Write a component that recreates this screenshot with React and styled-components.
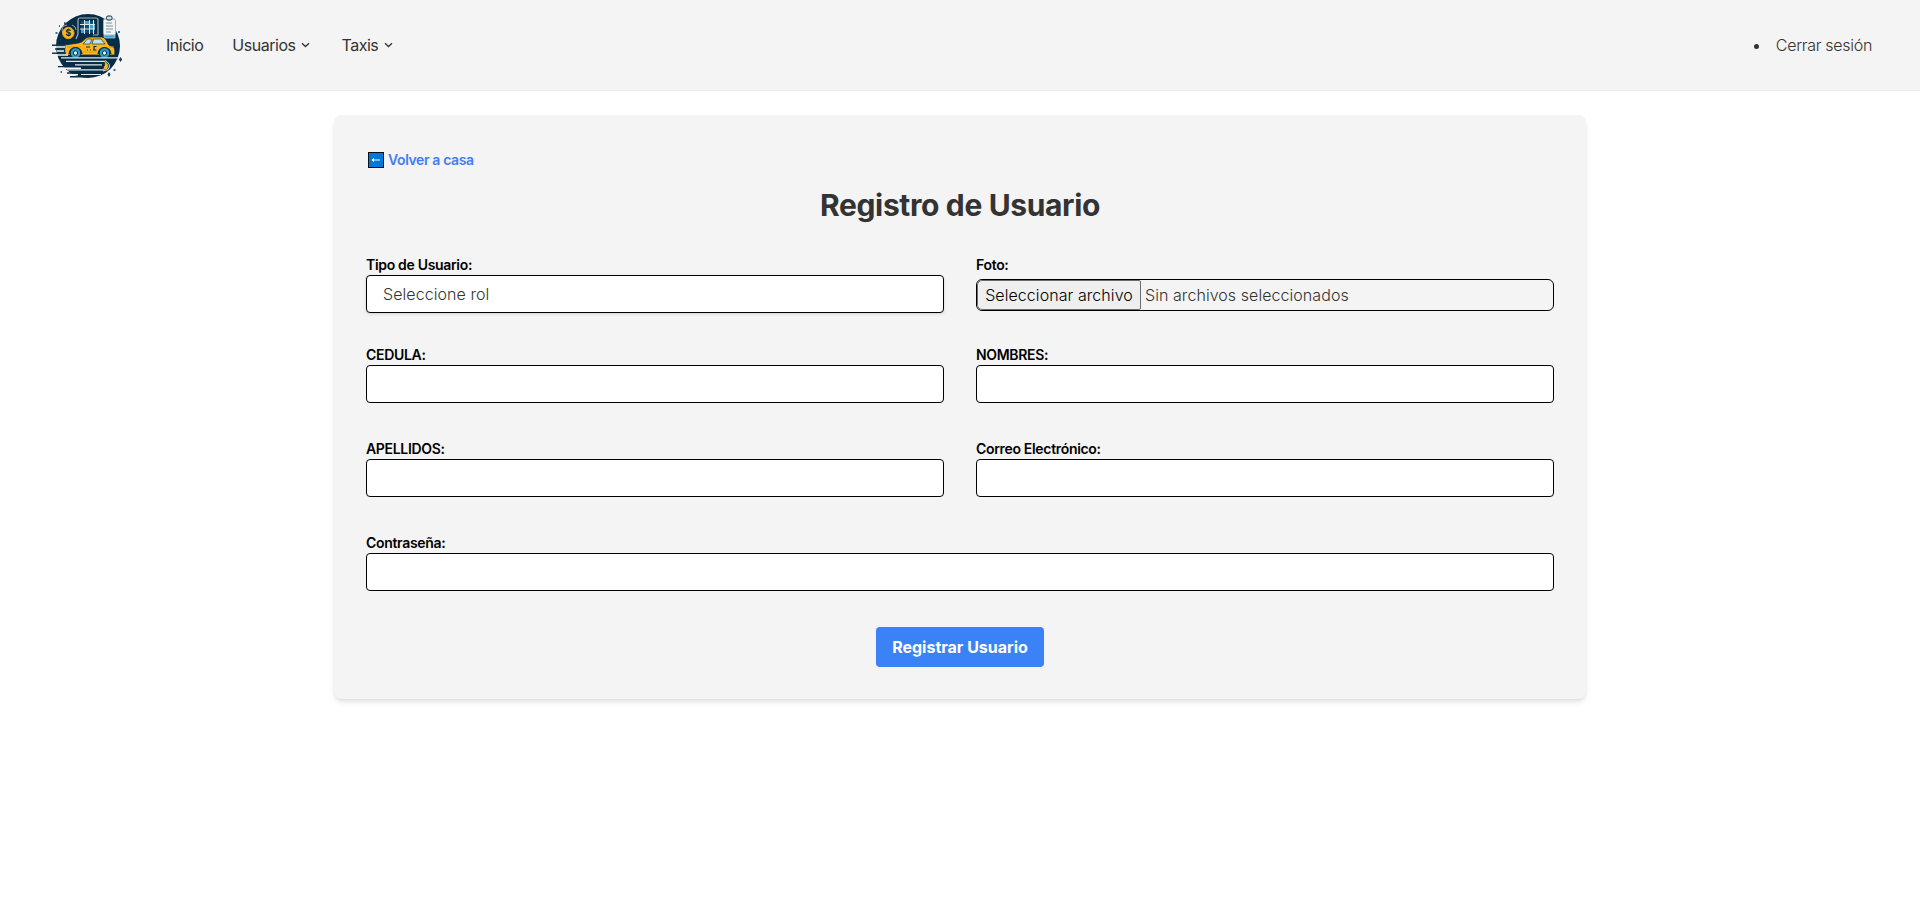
import React from "react";
import styled, { createGlobalStyle } from "styled-components";

const GlobalStyle = createGlobalStyle`
  *, *::before, *::after { box-sizing: border-box; }
  body {
    margin: 0;
    background: #fff;
    color: #333;
    font: 300 16px/24px Inter, "Liberation Sans", sans-serif;
  }
`;

const Page = styled.div`
  min-height: 100vh;
  background: #fff;
`;

const NavBar = styled.header`
  display: flex;
  align-items: center;
  height: 91px;
  padding: 0 48px;
  background: #f4f4f4;
  border-bottom: 1px solid #ebebeb;
`;

const Menu = styled.nav`
  display: flex;
  align-items: center;
  gap: 29px;
  margin-left: 40px;
`;

const MenuItem = styled.a`
  display: flex;
  align-items: center;
  gap: 5.5px;
  color: #333;
  font-weight: 400;
  letter-spacing: -0.48px;
  text-decoration: none;

  svg {
    margin-right: 2.5px;
  }
`;

const Session = styled.ul`
  margin: 0 0 0 auto;
  padding: 0;
  list-style: disc inside;
  letter-spacing: -0.3px;
`;

const Card = styled.main`
  display: flex;
  flex-direction: column;
  width: 1252px;
  margin: 24px auto 0;
  padding: 32px;
  background: #f4f4f4;
  border-radius: 8px;
  box-shadow: 0 4px 6px -1px rgba(0, 0, 0, 0.1), 0 2px 4px -1px rgba(0, 0, 0, 0.06);
`;

const BackLink = styled.a`
  display: flex;
  align-items: center;
  gap: 4px;
  height: 24px;
  padding: 1px 0 0 2px;
  color: #437cf7;
  font-size: 14px;
  font-weight: 600;
  letter-spacing: -0.38px;
  text-decoration: none;
`;

const Title = styled.h1`
  margin: 16px 0 32px;
  font-size: 30px;
  font-weight: 700;
  line-height: 36px;
  letter-spacing: -0.36px;
  text-align: center;
`;

const Form = styled.form`
  display: grid;
  grid-template-columns: 1fr 1fr;
  gap: 32px;
`;

const Field = styled.div`
  display: flex;
  flex-direction: column;
  grid-column: ${(p) => (p.$wide ? "1 / -1" : "auto")};
  margin-bottom: ${(p) => (p.$spaced ? "4px" : "0")};
`;

const Label = styled.label`
  color: #000;
  font-size: 14px;
  font-weight: 600;
  line-height: 20px;
  letter-spacing: -0.32px;
`;

const TextInput = styled.input`
  width: 100%;
  height: 38px;
  padding: 8px 12px;
  border: 1px solid #000;
  border-radius: 4px;
  background: #fff;
  font: inherit;
`;

const RoleSelect = styled.select`
  appearance: none;
  width: 100%;
  height: 38px;
  padding: 0 16px;
  border: 1px solid #000;
  border-radius: 4px;
  background: #fff;
  color: #333;
  font: inherit;
  letter-spacing: 0.07px;
  box-shadow: 0 1px 3px rgba(0, 0, 0, 0.14);
`;

const FilePicker = styled.div`
  display: flex;
  align-items: stretch;
  height: 32px;
  margin-top: 4px;
  border: 1px solid #000;
  border-radius: 6px;
  overflow: hidden;
`;

const FileButton = styled.button`
  width: 164px;
  padding: 0 7px;
  border: 1px solid #6b6b6b;
  border-radius: 5px 2px 2px 5px;
  background: #efefef;
  color: #000;
  font: inherit;
  letter-spacing: 0.07px;
  white-space: nowrap;
`;

const FileName = styled.span`
  margin-left: 4px;
  line-height: 30px;
  letter-spacing: 0.06px;
`;

const SubmitButton = styled.button`
  grid-column: 1 / -1;
  justify-self: center;
  width: 168px;
  height: 40px;
  padding: 0;
  border: 0;
  border-radius: 4px;
  background: #3b82f6;
  color: #fff;
  font: inherit;
  font-weight: 700;
`;

const Chevron = () => (
  <svg width="9" height="6" viewBox="0 0 9 6" fill="none" stroke="#333" strokeWidth="1.3">
    <path d="M1 1.2 4.5 4.5 8 1.2" />
  </svg>
);

const BackIcon = () => (
  <svg width="16" height="16" viewBox="0 0 16 16">
    <rect x=".5" y=".5" width="15" height="15" fill="#0078d7" stroke="#101010" />
    <path d="M5 8h7" stroke="#fff" />
    <path d="M6 5.9v4.2L3.4 8z" fill="#fff" />
  </svg>
);

const Logo = () => (
  <svg width="78" height="80" viewBox="0 0 78 80" fill="none">
    <circle cx="40" cy="41" r="32" fill="#062d45" />
    <path d="M30 29V15q0-2 2-2h16q2 0 2 2v15M30 29l-2 5M50 30h-5" stroke="#9db1bd" strokeWidth="1.2" />
    <path d="M33 16h14v12H33z" fill="#164c68" />
    <path d="M37 16h4v4h-4zM42 20h5v4h-5zM33 24h4v4h-4z" fill="#3fa1d0" />
    <path d="M36.5 15v14M41.5 15v14M45.5 15v14M32 19.5h15M32 24h15" stroke="#d5e8ef" />
    <path d="M15 29q-3-8 4-9M24 20q4 1 4 5" stroke="#8ba3b0" />
    <g>
      <rect x="55.5" y="14" width="12" height="16" rx="1.5" fill="#f3f3f3" stroke="#9db5c1" />
      <rect x="58.5" y="11" width="5.5" height="4" rx="1.5" fill="#d5e0e5" stroke="#062d45" />
      <path d="M58 18h6M58 21h7M58 24h7M58 27h5" stroke="#7a929f" />
      <path d="M56 30h11v3H56z" fill="#3fa1d0" stroke="#d5e8ef" strokeWidth=".6" />
    </g>
    <circle cx="20.3" cy="28" r="5.7" fill="#ffb51b" stroke="#eda214" />
    <text x="20.3" y="31.4" textAnchor="middle" fill="#062d45" fontFamily="Inter, sans-serif" fontSize="9" fontWeight="700">$</text>
    <path d="M16.8 50V40l14-2q4-1 6-4 2-2 5-2h12q2 0 4 2.5l3 5.5 4 2q2 1 2 3v5z" fill="#ffb51d" stroke="#062d45" strokeWidth=".8" />
    <path d="m35 39 4.5-5H44l-2 5zm9 0 1.5-5H53l4 5z" fill="#b9e3ee" stroke="#0c405a" strokeWidth=".7" />
    <path d="M19 42h14M33 47h17M61 42h5" stroke="#df951c" />
    <path d="M38 42h4M39 45h1M42 45h1M45 45h1M48.5 41.5h-2.5v3.5h2.5" stroke="#062d45" strokeWidth="1.2" />
    <path d="M20.5 49a7 7 0 0 1 14 0M49.5 49a7 7 0 0 1 14 0" fill="#062d45" />
    <g stroke="#062d45">
      <circle cx="27.5" cy="48" r="5.3" fill="#319ac0" />
      <circle cx="56.5" cy="48" r="5.3" fill="#319ac0" />
      <circle cx="27.5" cy="48" r="2.2" fill="#d7edf0" />
      <circle cx="56.5" cy="48" r="2.2" fill="#d7edf0" />
    </g>
    <path d="M8 42h9M9 46h7M8 50h12" stroke="#f3f3f3" strokeWidth="1.4" />
    <path d="M4 40.3h13M7 44h9M4 48.3h14" stroke="#18394c" strokeWidth="1.5" />
    <path d="M13 52.8h58M18 56.3h39M27 59.8h27M19 64.8h37M33 69.5h20" stroke="#dfe8ec" strokeWidth="1.2" />
    <path d="M10 61.8h29M19 68h20M22 71.7h19" stroke="#062d45" strokeWidth="1.5" />
    <path d="M10 63.2h23M18 69.8h12" stroke="#f4f4f4" strokeWidth="1.4" />
    <path d="M56 56q6 3 3 8l-4 1 1-3q2-3 0-6" fill="#ffb51b" />
    <path d="M57 55.5q7 4 3 9l-5 1.5" stroke="#dfe8ec" />
    <path d="m72.5 52 1.7 2.5-1.7 2.5-1.7-2.5zM61 67l1.5 2.5L61 72l-1.5-2.5z" fill="#173e59" />
    <path d="M16 18h1.4M11 21h1M7.5 28h2M12 34h1.5M70 27h2M12.5 67h1.5M65.5 65h2" stroke="#173e59" strokeWidth="1.6" />
  </svg>
);

const textFields = [
  { id: "cedula", label: "CEDULA:" },
  { id: "nombres", label: "NOMBRES:" },
  { id: "apellidos", label: "APELLIDOS:" },
  { id: "correo", label: "Correo Electrónico:", type: "email" },
  { id: "contrasena", label: "Contraseña:", type: "password", wide: true },
];

export default function App() {
  return (
    <Page>
      <GlobalStyle />
      <NavBar>
        <Logo />
        <Menu>
          <MenuItem>Inicio</MenuItem>
          <MenuItem>Usuarios <Chevron /></MenuItem>
          <MenuItem>Taxis <Chevron /></MenuItem>
        </Menu>
        <Session>
          <li>Cerrar sesión</li>
        </Session>
      </NavBar>
      <Card>
        <BackLink><BackIcon />Volver a casa</BackLink>
        <Title>Registro de Usuario</Title>
        <Form>
          <Field>
            <Label htmlFor="rol">Tipo de Usuario:</Label>
            <RoleSelect id="rol">
              <option>Seleccione rol</option>
            </RoleSelect>
          </Field>
          <Field>
            <Label>Foto:</Label>
            <FilePicker>
              <FileButton type="button">Seleccionar archivo</FileButton>
              <FileName>Sin archivos seleccionados</FileName>
            </FilePicker>
          </Field>
          {textFields.map((f) => (
            <Field key={f.id} $wide={f.wide} $spaced>
              <Label htmlFor={f.id}>{f.label}</Label>
              <TextInput id={f.id} type={f.type || "text"} />
            </Field>
          ))}
          <SubmitButton type="button">Registrar Usuario</SubmitButton>
        </Form>
      </Card>
    </Page>
  );
}
